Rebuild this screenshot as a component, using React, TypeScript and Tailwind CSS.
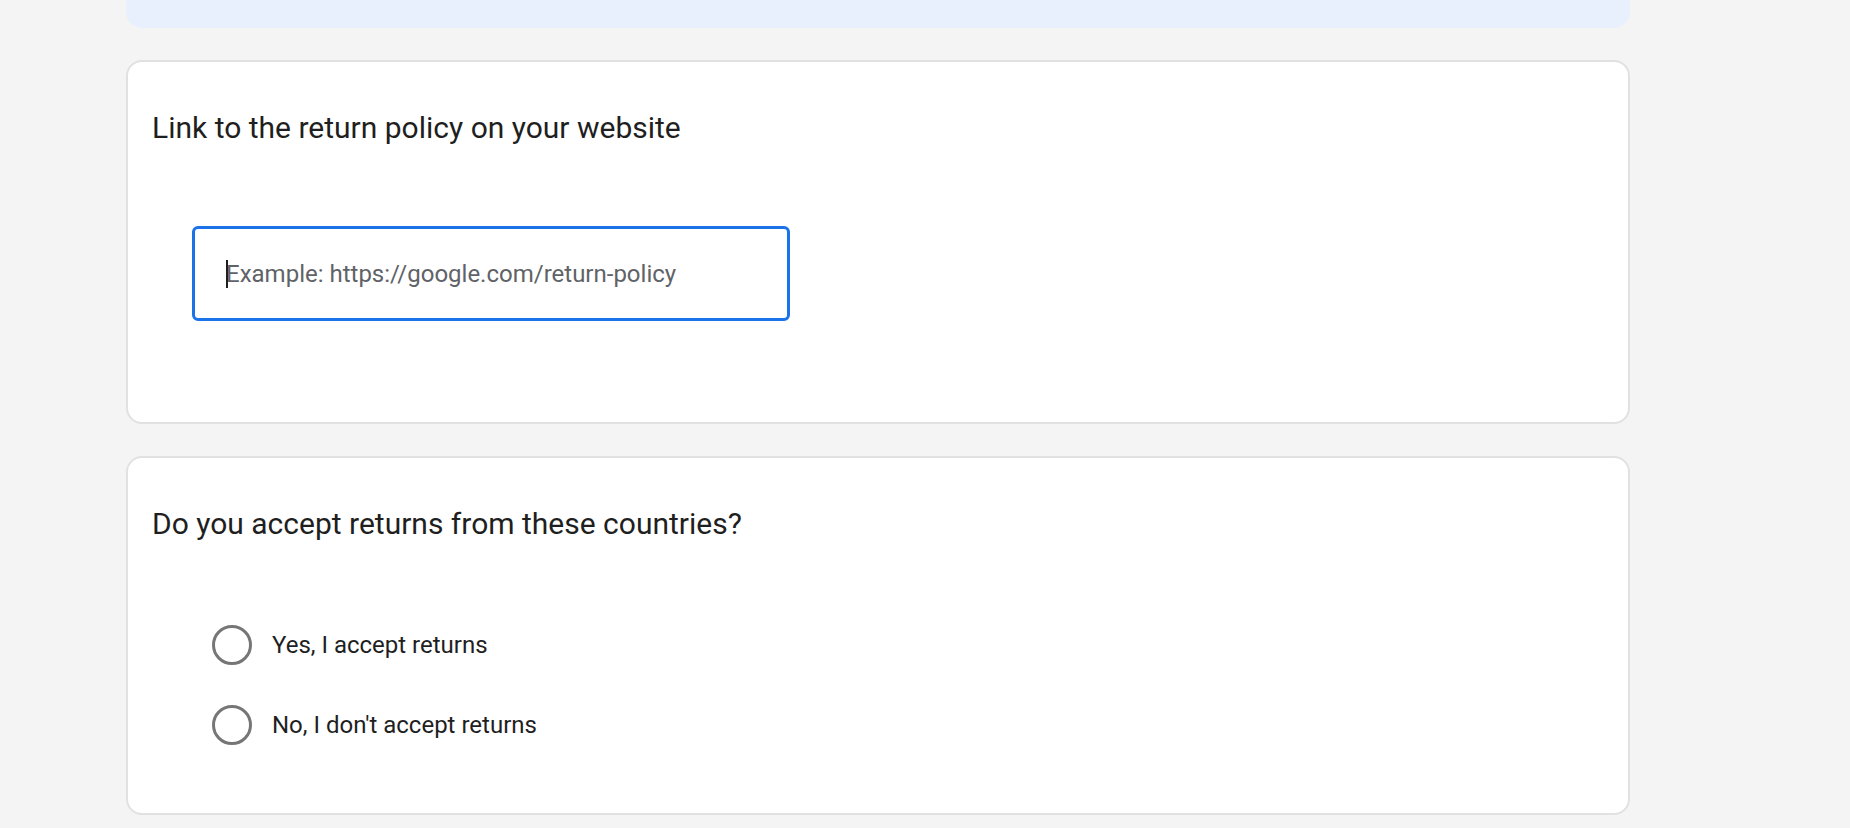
import { useState } from "react";

const font = { fontFamily: "Roboto, 'Noto Sans', Arial, sans-serif" };

function Radio({ label, checked, onClick }: { label: string; checked: boolean; onClick: () => void }) {
  return (
    <button type="button" onClick={onClick} className="flex items-center h-10 text-left">
      <span className="w-10 h-10 rounded-full border-[3px] border-[#767676] flex items-center justify-center">
        {checked && <span className="w-5 h-5 rounded-full bg-[#1a73e8]" />}
      </span>
      <span className="ml-5 text-[24px] text-[#1f1f1f]">{label}</span>
    </button>
  );
}

export default function App() {
  const [url, setUrl] = useState("");
  const [accepts, setAccepts] = useState<string | null>(null);

  return (
    <div className="min-h-screen bg-[#f4f4f4] pl-[126px]" style={font}>
      <div className="w-[1504px]">
        {/* tail of the info box above */}
        <div className="h-[28px] rounded-b-2xl bg-[#e8f0fe]" />

        {/* return policy link */}
        <section className="mt-8 h-[364px] rounded-2xl border-2 border-[#e1e1e1] bg-white px-6 pt-[46px]">
          <h2 className="text-[30px] leading-10 text-[#1f1f1f]">
            Link to the return policy on your website
          </h2>
          <div className="relative mt-[78px] ml-10 w-[598px] h-[95px] rounded-md border-[3px] border-[#1a73e8]">
            <input
              value={url}
              onChange={(e) => setUrl(e.target.value)}
              placeholder="Example: https://google.com/return-policy"
              className="w-full h-full rounded-md pl-[31px] pr-4 text-[24px] text-[#1f1f1f] placeholder:text-[#5f6368] outline-none"
            />
            {!url && <span className="absolute left-[31px] top-[31px] w-[2px] h-[28px] bg-[#1f1f1f]" />}
          </div>
        </section>

        {/* returns from countries */}
        <section className="mt-8 h-[359px] rounded-2xl border-2 border-[#e1e1e1] bg-white px-6 pt-[46px]">
          <h2 className="text-[30px] leading-10 text-[#1f1f1f]">
            Do you accept returns from these countries?
          </h2>
          <div className="mt-[81px] ml-[60px] flex flex-col gap-10">
            <Radio label="Yes, I accept returns" checked={accepts === "yes"} onClick={() => setAccepts("yes")} />
            <Radio label="No, I don't accept returns" checked={accepts === "no"} onClick={() => setAccepts("no")} />
          </div>
        </section>
      </div>
    </div>
  );
}
